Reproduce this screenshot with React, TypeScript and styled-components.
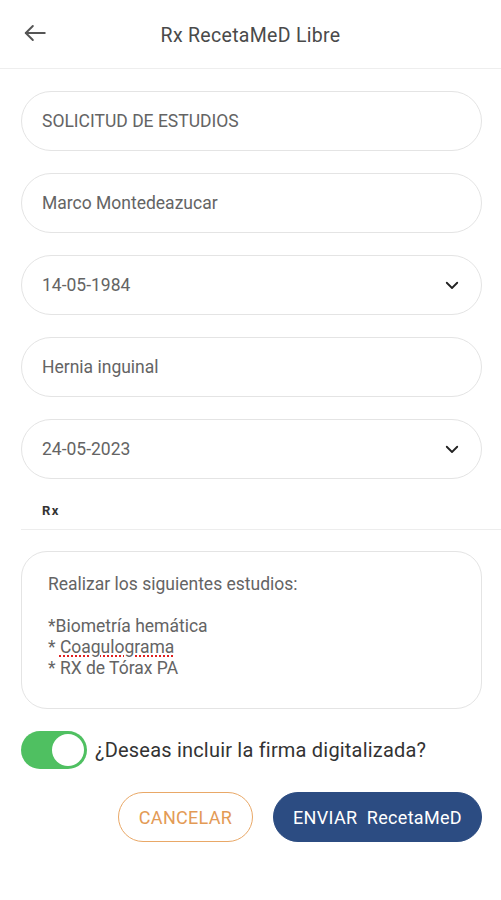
import styled, { createGlobalStyle } from "styled-components";

const GlobalStyle = createGlobalStyle`
  body {
    margin: 0;
    background: #fff;
    font-family: Roboto, "Noto Sans", sans-serif;
  }
`;

const fields = [
  { value: "SOLICITUD DE ESTUDIOS", select: false },
  { value: "Marco Montedeazucar", select: false },
  { value: "14-05-1984", select: true },
  { value: "Hernia inguinal", select: false },
  { value: "24-05-2023", select: true },
];

const App = () => (
  <Page>
    <GlobalStyle />
    <Header>
      <BackButton aria-label="back">
        <svg width="26" height="26" viewBox="0 0 24 24" fill="none" stroke="#555" strokeWidth="1.8" strokeLinecap="round" strokeLinejoin="round">
          <path d="M21 12H3.5" />
          <path d="M10 5.5L3.5 12l6.5 6.5" />
        </svg>
      </BackButton>
      <Title>Rx RecetaMeD Libre</Title>
    </Header>
    <Form>
      {fields.map((f) => (
        <Field key={f.value}>
          <FieldText>{f.value}</FieldText>
          {f.select && (
            <svg width="18" height="18" viewBox="0 0 24 24" fill="none" stroke="#222" strokeWidth="2.4" strokeLinecap="round" strokeLinejoin="round">
              <path d="M5 9l7 7 7-7" />
            </svg>
          )}
        </Field>
      ))}
      <SectionLabel>Rx</SectionLabel>
      <Divider />
      <NoteBox>
        <p>Realizar los siguientes estudios:</p>
        <p>&nbsp;</p>
        <p>*Biometría hemática</p>
        <p>
          * <Misspelled>Coagulograma</Misspelled>
        </p>
        <p>* RX de Tórax PA</p>
      </NoteBox>
      <ToggleRow>
        <Switch>
          <Knob />
        </Switch>
        <ToggleLabel>¿Deseas incluir la firma digitalizada?</ToggleLabel>
      </ToggleRow>
      <Actions>
        <Button $variant="outline">CANCELAR</Button>
        <Button $variant="solid">ENVIAR&nbsp; RecetaMeD</Button>
      </Actions>
    </Form>
  </Page>
);

const Page = styled.div`
  width: 501px;
  min-height: 900px;
  background: #fff;
`;

const Header = styled.header`
  position: relative;
  height: 68px;
  display: flex;
  align-items: center;
  justify-content: center;
  border-bottom: 1px solid #eeeeee;
`;

const BackButton = styled.button`
  position: absolute;
  left: 22px;
  top: 20px;
  padding: 0;
  border: none;
  background: none;
  display: flex;
`;

const Title = styled.h1`
  margin: 0;
  font-size: 19.5px;
  font-weight: 400;
  color: #4a4a4a;
  letter-spacing: 0.3px;
  padding-top: 2px;
`;

const Form = styled.div`
  padding: 22px 19px 40px 21px;
  display: flex;
  flex-direction: column;
`;

const Field = styled.div`
  height: 60px;
  box-sizing: border-box;
  border: 1px solid #e4e4e4;
  border-radius: 30px;
  display: flex;
  align-items: center;
  justify-content: space-between;
  padding: 0 20px 0 20px;
  margin-bottom: 22px;
  &:nth-child(5) {
    margin-bottom: 0;
  }
`;

const FieldText = styled.span`
  font-size: 17.5px;
  color: #646464;
`;

const SectionLabel = styled.div`
  margin: 24px 0 0 21px;
  font-size: 13px;
  font-weight: 700;
  color: #333;
  letter-spacing: 1.5px;
  line-height: 16px;
`;

const Divider = styled.div`
  margin: 10px -19px 0 0;
  height: 1px;
  background: #ededed;
`;

const NoteBox = styled.div`
  margin-top: 21px;
  height: 158px;
  box-sizing: border-box;
  border: 1px solid #e4e4e4;
  border-radius: 26px;
  padding: 22px 26px;
  font-size: 17.5px;
  line-height: 21px;
  color: #646464;
  p {
    margin: 0;
  }
`;

const Misspelled = styled.span`
  text-decoration: underline dotted #e02020;
  text-decoration-thickness: 2px;
  text-underline-offset: 2px;
`;

const ToggleRow = styled.div`
  margin-top: 22px;
  display: flex;
  align-items: center;
  gap: 8px;
`;

const Switch = styled.div`
  width: 66px;
  height: 38px;
  box-sizing: border-box;
  border-radius: 19px;
  background: #4fc061;
  padding: 3px;
  display: flex;
  justify-content: flex-end;
`;

const Knob = styled.div`
  width: 32px;
  height: 32px;
  border-radius: 50%;
  background: #fff;
`;

const ToggleLabel = styled.span`
  font-size: 20px;
  color: #333;
  letter-spacing: 0.2px;
`;

const Actions = styled.div`
  margin-top: 23px;
  display: flex;
  justify-content: flex-end;
  gap: 20px;
`;

const Button = styled.button<{ $variant: "outline" | "solid" }>`
  height: 50px;
  border-radius: 25px;
  font-family: Roboto, "Noto Sans", sans-serif;
  font-size: 18px;
  letter-spacing: 0.3px;
  padding: 0 10px;
  box-sizing: border-box;
  ${({ $variant }) =>
    $variant === "outline"
      ? `
    width: 135px;
    background: #fff;
    border: 1px solid #e9a867;
    color: #e39a55;
  `
      : `
    width: 209px;
    background: #2c4c82;
    border: 1px solid #2c4c82;
    color: #fff;
  `}
`;

export default App;
